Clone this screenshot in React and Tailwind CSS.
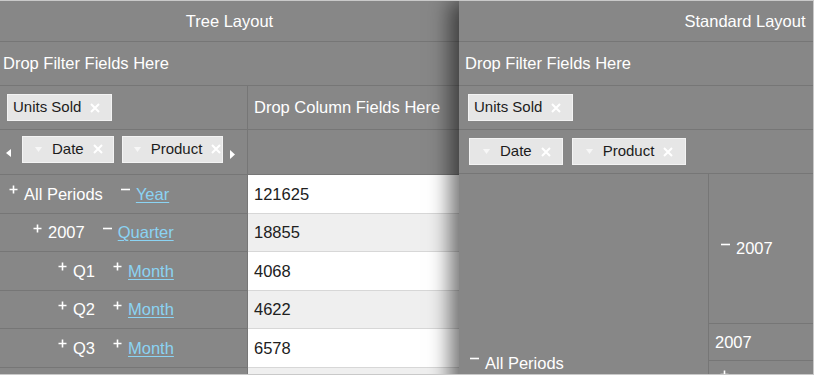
import React from 'react';

const Sign = ({ type }) => (
  <svg width="9" height="9" viewBox="0 0 9 9" className="shrink-0 mb-[9px]">
    <path d={type === '+' ? 'M4.5 0.5v8M0.5 4.5h8' : 'M0 4.5h9'} stroke="#fff" strokeWidth="1.6" />
  </svg>
);

const Cross = () => (
  <svg width="10" height="10" viewBox="0 0 10 10" className="shrink-0">
    <path d="M1 1l8 8M9 1l-8 8" stroke="#fff" strokeWidth="2" />
  </svg>
);

const DropTri = () => (
  <svg width="7" height="5" viewBox="0 0 7 5" className="shrink-0">
    <path d="M0 0h7L3.5 5z" fill="#f7f7f7" />
  </svg>
);

// field chip, "drop" ones carry the little sort triangle
const Chip = ({ label, drop, box }) => (
  <div className={`flex items-center h-[27px] shrink-0 overflow-hidden bg-[#e6e6e6] border border-[#f3f3f3] text-[15px] text-[#1c1c1c] ${box}`}>
    {drop && <DropTri />}
    <span className={`shrink-0 ${drop ? 'ml-[10px]' : ''}`}>{label}</span>
    <span className="ml-[9px] flex"><Cross /></span>
  </div>
);

const rows = [
  { pad: 'pl-[9px]', s1: '+', label: 'All Periods', s2: '−', link: 'Year', val: '121625' },
  { pad: 'pl-[33px]', s1: '+', label: '2007', s2: '−', link: 'Quarter', val: '18855' },
  { pad: 'pl-[58px]', s1: '+', label: 'Q1', s2: '+', link: 'Month', val: '4068' },
  { pad: 'pl-[58px]', s1: '+', label: 'Q2', s2: '+', link: 'Month', val: '4622' },
  { pad: 'pl-[58px]', s1: '+', label: 'Q3', s2: '+', link: 'Month', val: '6578' },
];

const TreePanel = () => (
  <div className="w-[459px] shrink-0 flex flex-col">
    <div className="h-[41px] shrink-0 border-b border-[#767676] flex items-center justify-center">Tree Layout</div>
    <div className="h-[44px] shrink-0 border-b border-[#767676] flex items-center pl-[3px]">Drop Filter Fields Here</div>

    <div className="h-[44px] shrink-0 border-b border-[#767676] flex">
      <div className="w-[248px] border-r border-[#767676] flex items-center pl-[7px]">
        <Chip label="Units Sold" box="pl-[5px] pr-[11px]" />
      </div>
      <div className="flex-1 flex items-center pl-[6px]">Drop Column Fields Here</div>
    </div>

    <div className="h-[45px] shrink-0 border-b border-[#767676] flex">
      <div className="w-[248px] border-r border-[#767676] flex items-center pl-[6px] pb-[6px]">
        <svg width="5" height="8" viewBox="0 0 5 8" className="shrink-0 mt-[8px]">
          <path d="M5 0v8L0 4z" fill="#fff" />
        </svg>
        <div className="ml-[11px] flex gap-[8px]">
          <Chip label="Date" drop box="pl-[12px] pr-[10px]" />
          <Chip label="Product" drop box="w-[101px] pl-[11px]" />
        </div>
        <svg width="5" height="9" viewBox="0 0 5 9" className="shrink-0 ml-[7px] mt-[10px]">
          <path d="M0 0v9L5 4.5z" fill="#fff" />
        </svg>
      </div>
      <div className="flex-1" />
    </div>

    {rows.map((r, i) => (
      <div key={i} className={`flex shrink-0 ${i % 2 === 0 ? 'h-[39px]' : 'h-[38px]'}`}>
        <div className={`w-[248px] border-r border-b border-[#767676] flex items-center ${r.pad}`}>
          <Sign type={r.s1} />
          <span className="ml-[6px]">{r.label}</span>
          <span className="ml-[18px] flex items-center">
            <Sign type={r.s2} />
            <span className="ml-[6px] text-[#8bd3f3] underline underline-offset-2">{r.link}</span>
          </span>
        </div>
        <div className={`flex-1 border-b border-[#d7d7d7] flex items-center pl-[6px] text-[#202020] ${i % 2 === 0 ? 'bg-white' : 'bg-[#efefef]'}`}>
          {r.val}
        </div>
      </div>
    ))}

    {/* next row, only its top edge is in view */}
    <div className="flex shrink-0 h-[38px]">
      <div className="w-[248px] border-r border-[#767676]" />
      <div className="flex-1 bg-[#efefef]" />
    </div>
  </div>
);

const StandardPanel = () => (
  <div className="relative z-10 w-[572px] shrink-0 flex flex-col bg-[#878787] shadow-[-9px_0_20px_rgba(0,0,0,0.55)]">
    <div className="h-[41px] shrink-0 border-b border-[#767676] flex items-center justify-center">Standard Layout</div>
    <div className="h-[44px] shrink-0 border-b border-[#767676] flex items-center pl-[6px]">Drop Filter Fields Here</div>
    <div className="h-[44px] shrink-0 border-b border-[#767676] flex items-center pl-[9px]">
      <Chip label="Units Sold" box="pl-[5px] pr-[11px]" />
    </div>
    <div className="h-[44px] shrink-0 border-b border-[#767676] flex items-center pl-[10px] gap-[9px]">
      <Chip label="Date" drop box="pl-[13px] pr-[11px]" />
      <Chip label="Product" drop box="pl-[13px] pr-[12px]" />
    </div>
    <div className="flex shrink-0">
      <div className="w-[250px] h-[378px] border-r border-[#767676] flex items-center pl-[11px]">
        <Sign type="−" />
        <span className="ml-[6px]">All Periods</span>
      </div>
      <div className="flex-1 flex flex-col">
        <div className="h-[150px] shrink-0 border-b border-[#767676] flex items-center pl-[12px]">
          <Sign type="−" />
          <span className="ml-[6px]">2007</span>
        </div>
        <div className="h-[37px] shrink-0 border-b border-[#767676] flex items-center pl-[6px]">2007</div>
        <div className="h-[37px] shrink-0 border-b border-[#767676] flex items-center pl-[11px]">
          <Sign type="+" />
        </div>
      </div>
    </div>
  </div>
);

export default function App() {
  return (
    <div className="w-[814px] h-[375px] overflow-hidden flex items-start bg-[#878787] border-t border-r border-b border-[#c9c9c9] text-[16.5px] text-white font-['Liberation_Sans',Arial,sans-serif]">
      <TreePanel />
      <StandardPanel />
    </div>
  );
}
